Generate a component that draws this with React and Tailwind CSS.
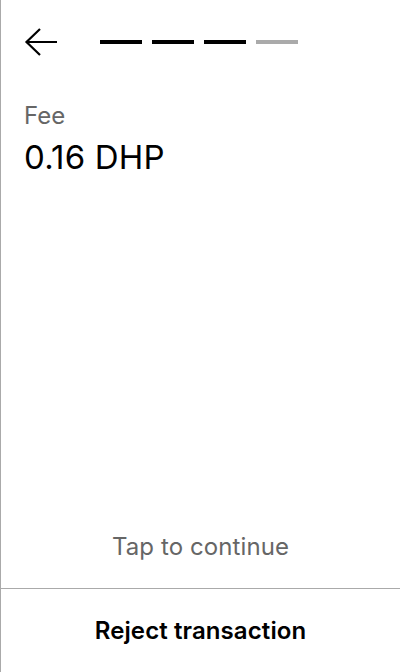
export default function App() {
  const steps = [true, true, true, false];

  return (
    <div
      className="flex flex-col h-[672px] w-[400px] bg-white border-l border-[#aaaaaa] text-black"
      style={{ fontFamily: "Inter, 'Liberation Sans', sans-serif" }}
    >
      <div className="flex items-center h-[86px] pl-[23px]">
        <svg width="34" height="30" viewBox="0 0 34 30" fill="none">
          <path
            d="M33 14H3M16 1L2.5 14L16 27"
            stroke="black"
            strokeWidth="2.2"
          />
        </svg>
        <div className="flex gap-[10px] ml-[42px] -mt-[2px]">
          {steps.map((done, i) => (
            <div
              key={i}
              className={
                done
                  ? "w-[42px] h-[4px] bg-black"
                  : "w-[42px] h-[4px] bg-[#aaaaaa]"
              }
            />
          ))}
        </div>
      </div>

      <div className="flex flex-col px-[23px] pt-[16px]">
        <span className="text-[24px] leading-[28px] text-[#666666]">Fee</span>
        <span className="text-[33px] leading-[40px] mt-[7px] tracking-[0.2px]">
          0.16 DHP
        </span>
      </div>

      <div className="flex-1" />

      <div className="flex justify-center pb-[25px]">
        <span className="text-[24px] leading-[32px] tracking-[0.1px] text-[#666666]">
          Tap to continue
        </span>
      </div>

      <div className="border-t border-[#aaaaaa] h-[84px] flex items-center justify-center">
        <span className="text-[24px] leading-[32px] font-semibold tracking-[0.1px]">
          Reject transaction
        </span>
      </div>
    </div>
  );
}
